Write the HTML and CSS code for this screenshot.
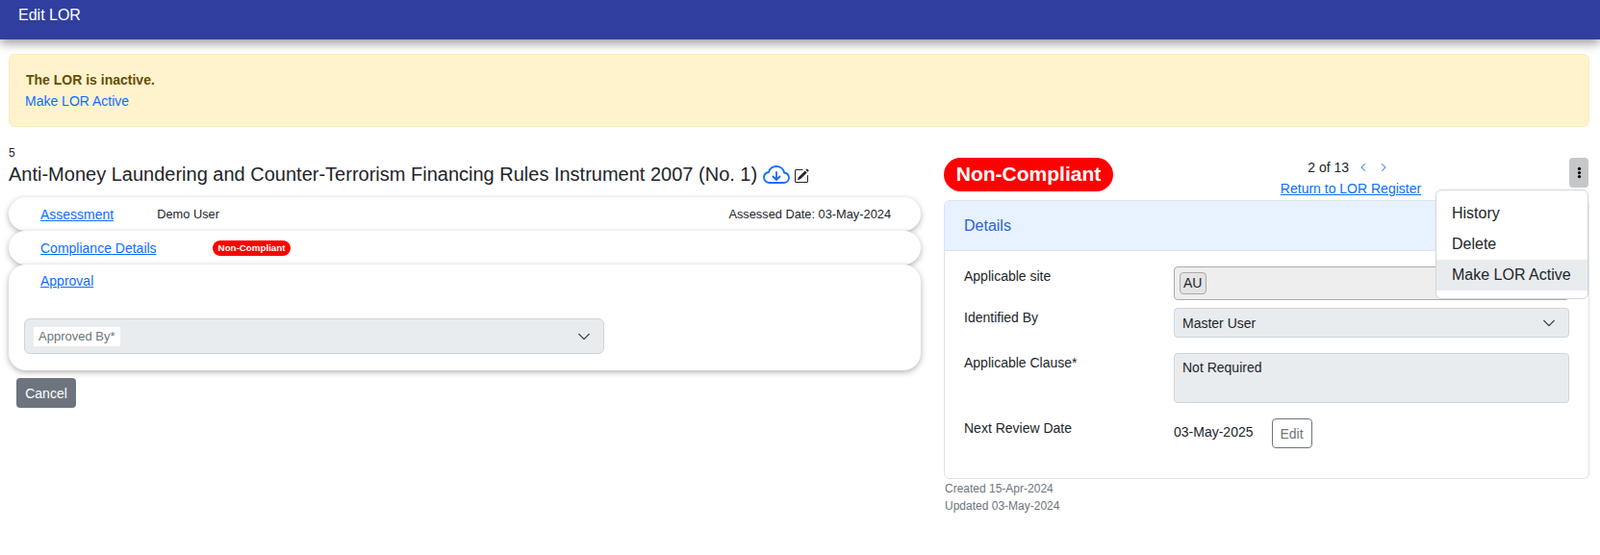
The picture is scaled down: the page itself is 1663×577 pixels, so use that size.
FILE: index.html
```html
<!DOCTYPE html>
<html lang="en">
<head>
    <meta charset="UTF-8">
    <meta name="viewport" content="width=device-width, initial-scale=1.0">
    <title>Edit LOR</title>
    <link rel="stylesheet" href="styles.css">
</head>
<body>

    <!-- Header -->
    <header class="app-bar">Edit LOR</header>

    <!-- Inactive notice -->
    <div class="alert">
        <div class="alert-title">The LOR is inactive.</div>
        <a href="#" class="alert-link">Make LOR Active</a>
    </div>

    <div class="columns">

        <!-- Left column -->
        <div class="left-col">
            <div class="ref-no">5</div>
            <div class="lor-title">
                <span>Anti-Money Laundering and Counter-Terrorism Financing Rules Instrument 2007 (No. 1)</span>
                <svg class="icon-cloud" viewBox="0 0 28 19">
                    <path d="M7 18C3.500 18 1 15.500 1 12.500 1 9.500 3 7.500 6 7 7 3.500 10 1 14 1c4.500 0 7.500 3 8 6.500 3 .5 5 2.500 5 5.500s-2.500 5-5.500 5z"/>
                    <path d="M14 7v7.500M10.500 11.500 14 15l3.500-3.500"/>
                </svg>
                <svg class="icon-edit" viewBox="0 0 16 16" fill="#212529">
                    <path d="M15.502 1.94a.5.5 0 0 1 0 .706L14.459 3.69l-2-2L13.502.646a.5.5 0 0 1 .707 0l1.293 1.293zm-1.75 2.456-2-2L4.939 9.21a.5.5 0 0 0-.121.196l-.805 2.414a.25.25 0 0 0 .316.316l2.414-.805a.5.5 0 0 0 .196-.12l6.813-6.814z"/>
                    <path fill-rule="evenodd" d="M1 13.5A1.5 1.5 0 0 0 2.5 15h11a1.5 1.5 0 0 0 1.5-1.5v-6a.5.5 0 0 0-1 0v6a.5.5 0 0 1-.5.5h-11a.5.5 0 0 1-.5-.5v-11a.5.5 0 0 1 .5-.5H9a.5.5 0 0 0 0-1H2.5A1.5 1.5 0 0 0 1 2.5v11z"/>
                </svg>
            </div>

            <div class="section section-short">
                <a href="#" class="section-link">Assessment</a>
                <span class="section-user">Demo User</span>
                <span class="section-date">Assessed Date: 03-May-2024</span>
            </div>
            <div class="section section-short">
                <a href="#" class="section-link">Compliance Details</a>
                <span class="mini-badge">Non-Compliant</span>
            </div>
            <div class="section section-open">
                <a href="#" class="section-link">Approval</a>
                <div class="approve-select">
                    <span class="approve-label">Approved By*</span>
                    <svg class="chevron" viewBox="0 0 16 16"><path d="M2 5l6 6 6-6"/></svg>
                </div>
            </div>

            <button class="btn-cancel">Cancel</button>
        </div>

        <!-- Right column -->
        <div class="right-col">
            <div class="status-row">
                <span class="status-pill">Non-Compliant</span>
                <div class="pager">
                    <div class="pager-count">2 of 13
                        <svg class="pager-arrow" viewBox="0 0 16 16"><path d="M10.500 3l-5 5 5 5"/></svg>
                        <svg class="pager-arrow" viewBox="0 0 16 16"><path d="M5.500 3l5 5-5 5"/></svg>
                    </div>
                    <a href="#" class="pager-link">Return to LOR Register</a>
                </div>
                <button class="btn-kebab">
                    <svg viewBox="0 0 16 16" fill="#000"><circle cx="8" cy="3" r="2"/><circle cx="8" cy="8" r="2"/><circle cx="8" cy="13" r="2"/></svg>
                </button>
                <div class="menu">
                    <div class="menu-item">History</div>
                    <div class="menu-item">Delete</div>
                    <div class="menu-item menu-item-active">Make LOR Active</div>
                </div>
            </div>

            <div class="details">
                <div class="details-head">Details</div>
                <div class="details-body">
                    <div class="field field-site">
                        <label>Applicable site</label>
                        <div class="site-box"><span class="site-tag">AU</span></div>
                    </div>
                    <div class="field field-identified">
                        <label>Identified By</label>
                        <div class="select-box">Master User
                            <svg class="chevron" viewBox="0 0 16 16"><path d="M2 5l6 6 6-6"/></svg>
                        </div>
                    </div>
                    <div class="field field-clause">
                        <label>Applicable Clause*</label>
                        <div class="text-box">Not Required</div>
                    </div>
                    <div class="field field-review">
                        <label>Next Review Date</label>
                        <div class="review-value">
                            <span class="review-date">03-May-2025</span>
                            <button class="btn-edit">Edit</button>
                        </div>
                    </div>
                </div>
            </div>
            <div class="meta">Created 15-Apr-2024</div>
            <div class="meta">Updated 03-May-2024</div>
        </div>
    </div>

</body>
</html>
```

FILE: styles.css
```css
/* General body styling */
body {
    font-family: "Liberation Sans", Arial, sans-serif;
    font-size: 14px;
    margin: 0;
    padding: 0;
    background-color: #fff;
    color: #212529;
}

a {
    color: #0d6efd;
}

/* Header bar */
.app-bar {
    height: 41px;
    box-sizing: border-box;
    padding: 6px 19px;
    background-color: #303f9f;
    color: #fff;
    font-size: 16px;
    line-height: 19px;
    box-shadow: 0 4px 10px rgba(0, 0, 0, 0.4);
}

/* Inactive notice */
.alert {
    box-sizing: border-box;
    height: 76px;
    margin: 15px 11px 0 9px;
    padding: 18px 16px;
    background-color: #fff3cd;
    border: 1px solid #ffecb5;
    border-radius: 6px;
}

.alert-title {
    padding-left: 1px;
    font-size: 14px;
    font-weight: bold;
    line-height: 16px;
    color: #664d03;
}

.alert-link {
    display: block;
    margin-top: 6px;
    font-size: 14px;
    line-height: 16px;
    text-decoration: none;
}

/* Two columns */
.columns {
    display: flex;
    padding: 20px 15px 0 9px;
}

.left-col {
    width: 948px;
    flex: none;
}

.right-col {
    flex: 1;
    margin-left: 24px;
}

.ref-no {
    font-size: 12px;
    line-height: 14px;
}

.lor-title {
    display: flex;
    align-items: center;
    height: 31px;
    font-size: 20px;
    margin-bottom: 8px;
}

.icon-cloud {
    width: 28px;
    height: 19px;
    margin-left: 6px;
    fill: none;
    stroke: #0d6efd;
    stroke-width: 1.8;
    stroke-linecap: round;
    stroke-linejoin: round;
}

.icon-edit {
    width: 16px;
    height: 16px;
    margin-left: 4px;
    margin-top: 2px;
}

/* Left sections */
.section {
    box-sizing: border-box;
    background-color: #fff;
    border-radius: 18px;
    padding: 8px 24px;
    font-size: 14px;
    box-shadow: 0 2px 6px rgba(0, 0, 0, 0.3);
}

.section-short {
    display: flex;
    align-items: center;
    height: 35px;
    padding: 0 31px 0 33px;
}

.section-open {
    height: 110px;
    padding: 9px 16px 8px;
}

.section-open .section-link {
    display: block;
    margin-left: 17px;
}

.section-user {
    font-size: 12.8px;
    margin-left: 45px;
    padding-bottom: 1px;
}

.section-date {
    font-size: 12.8px;
    margin-left: auto;
    padding-bottom: 1px;
}

.mini-badge {
    margin-left: 58px;
    padding: 2px 6px;
    background-color: #f00;
    color: #fff;
    font-size: 9.75px;
    font-weight: bold;
    line-height: 12px;
    border-radius: 8px;
}

.approve-select {
    display: flex;
    align-items: center;
    justify-content: space-between;
    box-sizing: border-box;
    width: 603px;
    height: 37px;
    margin-top: 31px;
    padding: 0 13px 0 9px;
    background-color: #e9ecef;
    border: 1px solid #ced4da;
    border-radius: 6px;
}

.approve-label {
    padding: 2px 5px;
    background-color: #fff;
    color: #6c757d;
    font-size: 13px;
    line-height: 16px;
}

.chevron {
    width: 14px;
    height: 14px;
    fill: none;
    stroke: #343a40;
    stroke-width: 1.5;
    stroke-linecap: round;
    stroke-linejoin: round;
}

.btn-cancel {
    display: block;
    width: 62px;
    height: 31px;
    margin: 8px 0 0 8px;
    padding: 0;
    background-color: #6c757d;
    color: #fff;
    border: none;
    border-radius: 4px;
    font-family: inherit;
    font-size: 14px;
}

/* Right top row */
.status-row {
    position: relative;
    display: flex;
    align-items: flex-start;
    height: 56px;
    padding-top: 12px;
    box-sizing: border-box;
}

.status-pill {
    box-sizing: border-box;
    width: 176px;
    height: 35px;
    background-color: #f00;
    color: #fff;
    font-size: 21px;
    font-weight: bold;
    line-height: 34px;
    text-align: center;
    border-radius: 18px;
}

.pager {
    width: 190px;
    margin-top: 2px;
    margin-left: 152px;
    text-align: center;
    font-size: 14px;
}

.pager-count {
    height: 22px;
    line-height: 16px;
    padding-right: 5px;
}

.pager-arrow {
    width: 12px;
    height: 12px;
    margin-left: 5px;
    fill: none;
    stroke: #0d6efd;
    stroke-width: 1.3;
    vertical-align: -1px;
}

.pager-link {
    display: block;
    line-height: 16px;
}

.btn-kebab {
    display: flex;
    align-items: center;
    justify-content: center;
    width: 20px;
    height: 31px;
    margin-left: auto;
    margin-right: 1px;
    padding: 0;
    background-color: #c6c7c8;
    border: none;
    border-radius: 4px;
}

.btn-kebab svg {
    width: 13px;
    height: 13px;
}

/* Dropdown menu */
.menu {
    position: absolute;
    top: 45px;
    right: 1px;
    z-index: 2;
    box-sizing: border-box;
    width: 159px;
    padding: 8px 0;
    background-color: #fff;
    border: 1px solid #d5d6d8;
    border-radius: 6px;
    font-size: 16px;
}

.menu-item {
    height: 32px;
    line-height: 32px;
    padding-left: 16px;
    white-space: nowrap;
}

.menu-item-active {
    background-color: #e9ecef;
}

/* Details card */
.details {
    box-sizing: border-box;
    height: 290px;
    background-color: #fff;
    border: 1px solid #dee2e6;
    border-radius: 6px;
}

.details-head {
    height: 52px;
    box-sizing: border-box;
    padding: 0 20px;
    line-height: 51px;
    font-size: 16px;
    color: #2a62d8;
    background-color: #e7f1ff;
    border-bottom: 1px solid #dee2e6;
    border-radius: 5px 5px 0 0;
}

.details-body {
    padding: 16px 20px 0;
}

.field {
    display: flex;
    align-items: flex-start;
}

.field label {
    width: 218px;
    flex: none;
    line-height: 16px;
    padding-top: 2px;
}

.site-box,
.select-box,
.text-box {
    box-sizing: border-box;
    width: 411px;
    border-radius: 4px;
}

.site-box {
    height: 35px;
    padding: 5px;
    background-color: #eee;
    border: 1px solid #aaa;
}

.site-tag {
    display: inline-block;
    padding: 2px 4px 2px 3px;
    line-height: 17px;
    background-color: #e4e4e4;
    border: 1px solid #aaa;
    border-radius: 4px;
}

.select-box {
    display: flex;
    align-items: center;
    justify-content: space-between;
    height: 31px;
    padding: 0 13px 0 8px;
    background-color: #e9ecef;
    border: 1px solid #ced4da;
}

.text-box {
    height: 52px;
    padding: 6px 8px;
    background-color: #e9ecef;
    border: 1px solid #ced4da;
}

.field-site { margin-bottom: 8px; }
.field-identified { margin-bottom: 16px; }
.field-clause { margin-bottom: 16px; }

.review-value {
    display: flex;
    align-items: center;
}

.review-date {
    padding-bottom: 4px;
}

.btn-edit {
    width: 42px;
    height: 31px;
    margin-left: 19px;
    padding: 0;
    background-color: #fff;
    color: #6c757d;
    border: 1px solid #6c757d;
    border-radius: 4px;
    font-family: inherit;
    font-size: 14px;
}

.meta {
    padding-left: 1px;
    font-size: 12px;
    line-height: 18px;
    color: #6c757d;
}

.details + .meta {
    margin-top: 1px;
}
```
